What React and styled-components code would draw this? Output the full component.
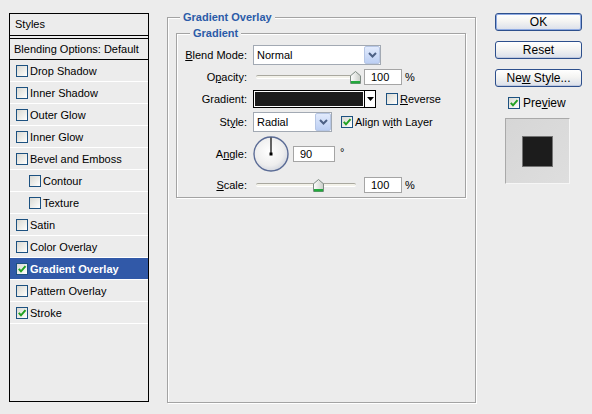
import React from 'react'
import styled, { createGlobalStyle, css } from 'styled-components'

const GlobalStyle = createGlobalStyle`
  html, body { margin: 0; padding: 0; background: #ececec; }
  body {
    font-family: "Liberation Sans", Arial, sans-serif;
    font-size: 11px;
    color: #000;
  }
  #root { width: 592px; height: 414px; overflow: hidden; }
`;

const Dialog = styled.div`
  display: flex;
  align-items: flex-start;
  box-sizing: border-box;
  width: 592px;
  height: 414px;
  padding: 11px 0 0 9px;
`;

/* ---------- left list ---------- */
const StylesPanel = styled.div`
  box-sizing: border-box;
  width: 140px;
  height: 389px;
  margin-top: 2px;
  border: 1px solid #000;
  display: flex;
  flex-direction: column;
`;

const PanelTitle = styled.div`
  height: 21px;
  line-height: 21px;
  padding-left: 5px;
  border-bottom: 1px solid #000;
`;

const BlendingRow = styled.div`
  margin-top: 2px;
  height: 20px;
  line-height: 20px;
  padding-left: 4px;
  border-top: 1px solid #000;
  border-bottom: 1px solid #000;
`;

const EffectRow = styled.div`
  display: flex;
  align-items: center;
  gap: 2px;
  height: 21px;
  padding-left: ${p => (p.$indent ? 19 : 6)}px;
  border-bottom: 1px solid #fff;
  ${p => p.$active && css`
    background: #3159a8;
    color: #fff;
    font-weight: bold;
  `}
`;

/* ---------- checkbox ---------- */
const Box = styled.span`
  box-sizing: border-box;
  flex: none;
  width: 12px;
  height: 12px;
  border: 1px solid #1c5180;
  background: linear-gradient(135deg, #d9d9d3 0%, #f1f1ee 65%, #fff 100%);
  display: inline-flex;
  align-items: center;
  justify-content: center;
`;

function Check({ on }) {
  return (
    <Box>
      {on && (
        <svg width="10" height="10" viewBox="0 0 10 10">
          <path d="M1.8 4.8 L4 7.3 L8.5 2.2" fill="none" stroke="#21a121" strokeWidth="2" />
        </svg>
      )}
    </Box>
  );
}

const CheckLabel = styled.div`
  display: flex;
  align-items: center;
  gap: 2px;
  margin-left: ${p => p.$gap || 0}px;
  font-size: ${p => p.$size || 11}px;
`;

/* ---------- fieldsets ---------- */
const Group = styled.fieldset`
  box-sizing: border-box;
  margin: 0;
  padding: 0;
  min-width: 0;
  border: 1px solid #a3a3a3;
  box-shadow: inset 1px 1px 0 #fff, 1px 1px 0 #fff;
`;

const OuterGroup = styled(Group)`
  width: 309px;
  height: 392px;
  margin-left: 18px;
`;

const InnerGroup = styled(Group)`
  width: 290px;
  margin: 3px 0 0 8px;
`;

const Legend = styled.legend`
  margin-left: ${p => p.$offset}px;
  padding: 0 3px;
  background: #ececec;
  font-weight: bold;
  line-height: 13px;
  color: #2b5ba8;
`;

const Form = styled.div`
  display: grid;
  grid-template-columns: 71px 1fr;
  grid-template-rows: 22px 22px 22px 24px 40px 22px;
  column-gap: 5px;
  align-items: center;
  padding: 4px 0 1px;
`;

const Label = styled.div`
  text-align: right;
  padding-right: 1px;
`;

const Field = styled.div`
  display: flex;
  align-items: center;
`;

/* ---------- controls ---------- */
const Select = styled.div`
  box-sizing: border-box;
  display: flex;
  width: ${p => p.$width}px;
  height: 20px;
  border: 1px solid #a2a9b3;
  background: #fff;
`;

const SelectText = styled.span`
  flex: 1;
  line-height: 18px;
  padding-left: 3px;
`;

const DropButton = styled.span`
  box-sizing: border-box;
  width: 16px;
  display: flex;
  align-items: center;
  justify-content: center;
  border: 1px solid #b6c6e4;
  border-radius: 2px;
  background: linear-gradient(#e2ebfd, #bccff3);
`;

function Dropdown({ width, value }) {
  return (
    <Select $width={width}>
      <SelectText>{value}</SelectText>
      <DropButton>
        <svg width="9" height="6" viewBox="0 0 9 6">
          <path d="M1 1 L4.5 4.5 L8 1" fill="none" stroke="#4d6185" strokeWidth="2" />
        </svg>
      </DropButton>
    </Select>
  );
}

const ValueBox = styled.div`
  box-sizing: border-box;
  width: ${p => p.$width || 38}px;
  height: 16px;
  margin-left: ${p => p.$gap || 0}px;
  padding-left: 6px;
  line-height: 14px;
  border: 1px solid #a5a5a5;
  background: #fff;
`;

const Unit = styled.span`
  margin-left: 3px;
  ${p => p.$raised && css`
    align-self: flex-start;
    margin: 10px 0 0 5px;
  `}
`;

const SliderWrap = styled.div`
  position: relative;
  display: flex;
  align-items: center;
  width: 100px;
  height: 14px;
  margin-left: 3px;
`;

const Track = styled.div`
  box-sizing: border-box;
  width: 100%;
  height: 4px;
  border-top: 1px solid #a9a89f;
  border-bottom: 1px solid #fff;
  border-radius: 2px;
  background: #f3f2ea;
`;

const Thumb = styled.svg`
  position: absolute;
  top: 1px;
  left: ${p => p.$left}px;
`;

function Slider({ thumb, id }) {
  return (
    <SliderWrap>
      <Track />
      <Thumb $left={thumb - 5} width="11" height="13" viewBox="0 0 11 13">
        <defs>
          <linearGradient id={id} x1="0" y1="0" x2="1" y2="0">
            <stop offset="0" stopColor="#ffffff" />
            <stop offset="1" stopColor="#c9cdc8" />
          </linearGradient>
        </defs>
        <path d="M5.5 0.5 L10.5 4.8 L10.5 12.5 L0.5 12.5 L0.5 4.8 Z" fill={`url(#${id})`} stroke="#7d8a83" />
        <rect x="1" y="10" width="9" height="2.5" fill="#22a83c" />
      </Thumb>
    </SliderWrap>
  );
}

const GradientPicker = styled.div`
  box-sizing: border-box;
  display: flex;
  width: 123px;
  height: 18px;
  padding: 1px 0 1px 1px;
  border: 1px solid #000;
  background: #fff;
`;

const Swatch = styled.div`
  flex: 1;
  background: #1c1c1c;
`;

const PickerArrow = styled.div`
  width: 10px;
  margin-left: 1px;
  margin-top: -1px;
  margin-bottom: -1px;
  border-left: 1px solid #000;
  display: flex;
  align-items: center;
  justify-content: center;
`;

/* ---------- right column ---------- */
const Side = styled.div`
  width: 87px;
  margin: 2px 0 0 19px;
  display: flex;
  flex-direction: column;
  gap: 10px;
`;

const Button = styled.button`
  box-sizing: border-box;
  width: 87px;
  height: 18px;
  padding: 0;
  font-family: "Liberation Sans", Arial, sans-serif;
  font-size: 12px;
  color: #000;
  border: 1px solid #2d4f8c;
  border-radius: 3px;
  background: linear-gradient(#ffffff 0%, #f4f4f2 45%, #dadfea 100%);
  box-shadow: inset 0 -1px 0 #bfc9de;
  ${p => p.$primary && css`
    box-shadow: inset 0 0 0 1px #8eaae2;
  `}
`;

const PreviewRow = styled(CheckLabel)`
  margin: -1px 0 0 13px;
  gap: 3px;
`;

const PreviewBox = styled.div`
  box-sizing: border-box;
  width: 65px;
  height: 66px;
  margin: -2px 0 0 10px;
  border-top: 1px solid #a9a9a9;
  border-left: 1px solid #a9a9a9;
  border-right: 1px solid #f6f6f6;
  border-bottom: 1px solid #f6f6f6;
  background: linear-gradient(135deg, #d6d6d6, #dedede);
  display: flex;
  align-items: center;
  justify-content: center;
`;

const PreviewSquare = styled.div`
  box-sizing: border-box;
  width: 31px;
  height: 31px;
  border: 1px solid #737373;
  background: #1c1c1c;
`;

const effects = [
  { name: 'Drop Shadow' },
  { name: 'Inner Shadow' },
  { name: 'Outer Glow' },
  { name: 'Inner Glow' },
  { name: 'Bevel and Emboss' },
  { name: 'Contour', indent: true },
  { name: 'Texture', indent: true },
  { name: 'Satin' },
  { name: 'Color Overlay' },
  { name: 'Gradient Overlay', on: true, active: true },
  { name: 'Pattern Overlay' },
  { name: 'Stroke', on: true },
];

export default function App() {
  return (
    <>
      <GlobalStyle />
      <Dialog>
        <StylesPanel>
          <PanelTitle>Styles</PanelTitle>
          <BlendingRow>Blending Options: Default</BlendingRow>
          {effects.map(e => (
            <EffectRow key={e.name} $indent={e.indent} $active={e.active}>
              <Check on={e.on} />
              <span>{e.name}</span>
            </EffectRow>
          ))}
        </StylesPanel>

        <OuterGroup>
          <Legend $offset={12}>Gradient Overlay</Legend>
          <InnerGroup>
            <Legend $offset={13}>Gradient</Legend>
            <Form>
              <Label><u>B</u>lend Mode:</Label>
              <Field><Dropdown width={128} value="Normal" /></Field>

              <Label>O<u>p</u>acity:</Label>
              <Field>
                <Slider thumb={99} id="opacityThumb" />
                <ValueBox $gap={8}>100</ValueBox>
                <Unit>%</Unit>
              </Field>

              <Label>Gradient:</Label>
              <Field>
                <GradientPicker>
                  <Swatch />
                  <PickerArrow>
                    <svg width="7" height="4" viewBox="0 0 7 4"><path d="M0 0 H7 L3.5 4 Z" fill="#000" /></svg>
                  </PickerArrow>
                </GradientPicker>
                <CheckLabel $gap={10}>
                  <Check />
                  <span><u>R</u>everse</span>
                </CheckLabel>
              </Field>

              <Label>St<u>y</u>le:</Label>
              <Field>
                <Dropdown width={79} value="Radial" />
                <CheckLabel $gap={9}>
                  <Check on />
                  <span>Align w<u>i</u>th Layer</span>
                </CheckLabel>
              </Field>

              <Label>A<u>n</u>gle:</Label>
              <Field>
                <svg width="36" height="36" viewBox="0 0 36 36">
                  <defs>
                    <radialGradient id="dialFill" cx="45%" cy="42%" r="60%">
                      <stop offset="0" stopColor="#ffffff" />
                      <stop offset="0.7" stopColor="#eeeeee" />
                      <stop offset="1" stopColor="#d2d6df" />
                    </radialGradient>
                  </defs>
                  <circle cx="18" cy="18" r="17" fill="url(#dialFill)" stroke="#5a6b95" strokeWidth="1.4" />
                  <line x1="18" y1="18" x2="18" y2="1.5" stroke="#000" strokeWidth="1.2" />
                  <rect x="16.5" y="16.5" width="3" height="3" fill="#000" />
                </svg>
                <ValueBox $width={42} $gap={4}>90</ValueBox>
                <Unit $raised>°</Unit>
              </Field>

              <Label><u>S</u>cale:</Label>
              <Field>
                <Slider thumb={62} id="scaleThumb" />
                <ValueBox $gap={8}>100</ValueBox>
                <Unit>%</Unit>
              </Field>
            </Form>
          </InnerGroup>
        </OuterGroup>

        <Side>
          <Button $primary>OK</Button>
          <Button>Reset</Button>
          <Button>Ne<u>w</u> Style...</Button>
          <PreviewRow $size={12}>
            <Check on />
            <span>Pre<u>v</u>iew</span>
          </PreviewRow>
          <PreviewBox>
            <PreviewSquare />
          </PreviewBox>
        </Side>
      </Dialog>
    </>
  );
}
